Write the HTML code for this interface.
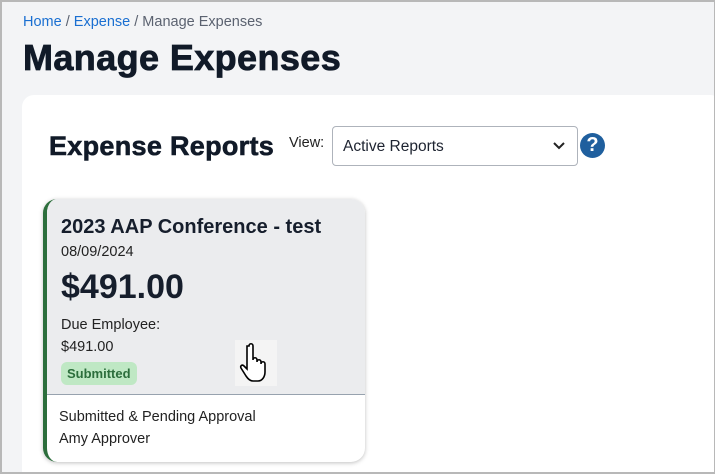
<!DOCTYPE html>
<html><head><style>
*{margin:0;padding:0;box-sizing:border-box}
html,body{width:718px;height:475px;overflow:hidden}
body{background:#fff;font-family:"Liberation Sans",sans-serif;position:relative}
.frame{position:absolute;left:0;top:0;width:715px;height:474px;border:2px solid #b8b8b8;border-right:1px solid #b8b8b8;background:#f3f4f6;overflow:hidden}
.in{position:absolute;left:-2px;top:-2px;width:718px;height:475px}
.bc{position:absolute;left:23px;top:14px;font-size:14.5px;color:#5b6270}
.bc a{color:#1a6fd1;text-decoration:none}
h1{position:absolute;left:23px;top:37px;font-size:36px;font-weight:900;color:#111a28;letter-spacing:0.4px;-webkit-text-stroke:0.8px #111a28}
.panel{position:absolute;left:22px;top:95px;width:700px;height:390px;background:#fff;border-radius:12px}
h2{position:absolute;left:49px;top:131px;font-size:27px;font-weight:900;color:#111a28;letter-spacing:0.3px;-webkit-text-stroke:0.6px #111a28}
.vl{position:absolute;left:289px;top:135px;font-size:14.5px;color:#222}
.sel{position:absolute;left:332px;top:126px;width:246px;height:40px;border:1px solid #aeb3bb;border-radius:4px;font-size:15.5px;color:#1d2330;padding:11px 10px}
.sel svg{position:absolute;right:12px;top:15px}
.help{position:absolute;left:580px;top:133px;width:25px;height:25px;border-radius:50%;background:#1f5f9e;color:#fff;font-weight:bold;font-size:20px;text-align:center;line-height:25px}
.card{position:absolute;left:43px;top:199px;width:322px;height:263px;border-radius:14px;background:#fff;box-shadow:0 1px 4px rgba(0,0,0,.25);overflow:hidden;border-left:4px solid #2c6e3c}
.top{position:absolute;left:0;top:0;right:0;height:196px;background:#ebecee;border-bottom:1px solid #97a2ae}
.t1{position:absolute;left:14px;top:17px;font-size:20px;font-weight:bold;color:#161e2c}
.t2{position:absolute;left:14px;top:45px;font-size:14.5px;color:#222}
.t3{position:absolute;left:14px;top:69px;font-size:34px;font-weight:bold;color:#161e2c}
.t4{position:absolute;left:14px;top:118px;font-size:14.5px;color:#222}
.t5{position:absolute;left:14px;top:140px;font-size:14.5px;color:#222}
.badge{position:absolute;left:14px;top:163px;background:#bfe8c4;color:#2c6e3c;font-size:13px;font-weight:bold;border-radius:6px;padding:4px 6px}
.b1{position:absolute;left:12px;top:210px;font-size:14.5px;color:#222}
.b2{position:absolute;left:12px;top:232px;font-size:14.5px;color:#222}
.hand{position:absolute;left:188px;top:141px;width:42px;height:46px;background:#f4f4f4}
</style></head><body>
<div class="frame"><div class="in">
<div class="bc"><a>Home</a> / <a>Expense</a> / Manage Expenses</div>
<h1>Manage Expenses</h1>
<div class="panel"></div>
<h2>Expense Reports</h2>
<div class="vl">View:</div>
<div class="sel">Active Reports<svg width="12" height="8" viewBox="0 0 12 8"><path d="M1 1l5 5 5-5" fill="none" stroke="#222" stroke-width="2"/></svg></div>
<div class="help">?</div>
<div class="card">
<div class="top">
<div class="t1">2023 AAP Conference - test</div>
<div class="t2">08/09/2024</div>
<div class="t3">$491.00</div>
<div class="t4">Due Employee:</div>
<div class="t5">$491.00</div>
<div class="badge">Submitted</div>
<div class="hand"><svg width="42" height="46" viewBox="0 0 42 46"><path d="M14 6c0-3 4-3 4 0v14c0-3 4-3 4 0v2c0-3 4-3 4 0v2c0-3 4-3 4 0v8c0 5-3 9-7 9h-5c-3 0-5-2-7-5l-5-8c-1-2 1-4 3-2l3 3V6z" fill="#fff" stroke="#000" stroke-width="1.6"/></svg></div>
</div>
<div class="b1">Submitted &amp; Pending Approval</div>
<div class="b2">Amy Approver</div>
</div>
</div></div>
</body></html>
